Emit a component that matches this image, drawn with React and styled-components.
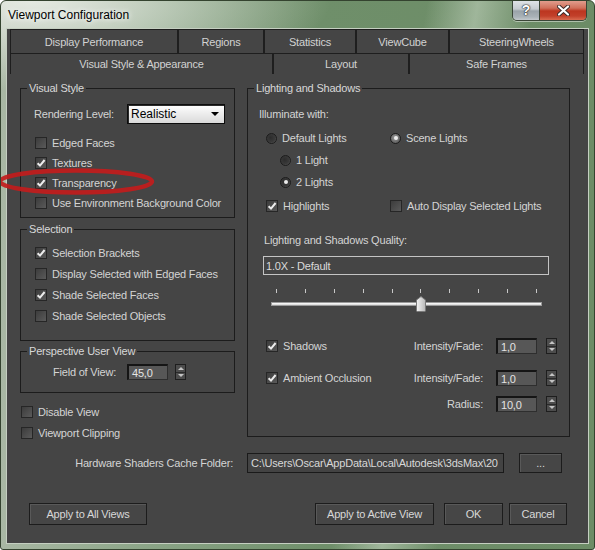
import React from 'react';
import styled, { createGlobalStyle } from 'styled-components';

const GlobalStyle = createGlobalStyle`
  html, body {
    margin: 0;
    padding: 0;
    background: #ffffff;
  }
  body {
    font-family: "Liberation Sans", Arial, sans-serif;
    font-size: 11px;
  }
`;

const Window = styled.div`
  position: relative;
  width: 595px;
  height: 550px;
  box-sizing: border-box;
  display: flex;
  flex-direction: column;
  border: 1px solid #34432f;
  border-radius: 6px 6px 3px 3px;
  overflow: hidden;
  background:
    radial-gradient(ellipse 300px 90px at 30px 0px, rgba(232, 236, 229, 0.95), rgba(232, 236, 229, 0) 100%),
    linear-gradient(100deg, rgba(200, 215, 196, 0) 0, rgba(200, 215, 196, 0) 420px, rgba(200, 215, 196, 0.55) 470px, rgba(200, 215, 196, 0) 525px),
    linear-gradient(90deg, #a9b8a4 0, #8aa486 150px, #6f8f6a 320px, #6c8c66 100%);
`;

const TitleBar = styled.div`
  height: 28px;
  flex: none;
  display: flex;
  align-items: flex-start;
  padding-left: 7px;
`;

const Title = styled.div`
  margin-top: 7px;
  font-size: 12px;
  line-height: 15px;
  color: #000;
  text-shadow: 0 0 5px rgba(255, 255, 255, 0.95), 0 0 9px rgba(255, 255, 255, 0.8);
`;

const CaptionButtons = styled.div`
  margin-left: auto;
  margin-right: 7px;
  margin-top: -1px;
  display: flex;
  height: 20px;
  border: 1px solid #3a4637;
  border-top: none;
  border-radius: 0 0 5px 5px;
  overflow: hidden;
  box-shadow: 0 1px 0 rgba(255, 255, 255, 0.45);
`;

const CaptionButton = styled.div`
  width: ${p => p.w}px;
  display: flex;
  align-items: center;
  justify-content: center;
  background: ${p => p.danger
    ? 'linear-gradient(#e3a394, #d0705b 40%, #bc3620 55%, #c2402a 80%, #d86a4f)'
    : 'linear-gradient(#e2e6e9, #c6ccd0 45%, #9aa3a9 55%, #aab3b8 85%, #c4cacd)'};
  & + & {
    border-left: 1px solid #3a4637;
  }
`;

const HelpGlyph = styled.span`
  font-family: "Liberation Sans", Arial, sans-serif;
  font-weight: bold;
  font-size: 14px;
  color: #fff;
  text-shadow: 0 0 1px #222, 0 0 1px #222, 0 0 2px #333;
`;

const Client = styled.div`
  flex: 1;
  margin: 0 6px 6px 6px;
  background: #454545;
  box-shadow: 0 0 0 1px #c5cfc1;
  display: flex;
  flex-direction: column;
  color: #d4d4d4;
  letter-spacing: -0.2px;
`;

const Tabs = styled.div`
  padding-left: 3px;
  display: flex;
  flex-direction: column;
`;

const TabRow = styled.div`
  display: flex;
  height: ${p => p.h}px;
`;

const Tab = styled.div`
  width: ${p => p.w}px;
  box-sizing: border-box;
  border: 1px solid #1e1e1e;
  border-bottom: none;
  display: flex;
  align-items: center;
  justify-content: center;
  color: #d2d2d2;
  font-size: 11px;
`;

const Panel = styled.div`
  display: flex;
  gap: 12px;
  padding: 7px 0 0 13px;
`;

const Column = styled.div`
  width: ${p => p.w}px;
  display: flex;
  flex-direction: column;
`;

const Group = styled.fieldset`
  margin: ${p => p.mt || 0}px 0 0 0;
  padding: 0;
  min-width: 0;
  border: 1px solid #1c1c1c;
  height: ${p => p.h}px;
  box-sizing: border-box;
`;

const Legend = styled.legend`
  margin-left: 6px;
  padding: 0 2px;
  font-size: 11px;
  line-height: 14px;
  color: #d8d8d8;
`;

const Row = styled.div`
  display: flex;
  align-items: center;
  height: ${p => p.h || 20}px;
  margin-top: ${p => p.mt || 0}px;
  padding-left: ${p => p.pl || 0}px;
  padding-right: ${p => p.pr || 0}px;
  white-space: nowrap;
`;

const Item = styled.div`
  display: flex;
  align-items: center;
  gap: 5px;
  width: ${p => (p.w ? `${p.w}px` : 'auto')};
  flex: ${p => (p.grow ? 1 : 'none')};
`;

const Text = styled.span`
  display: inline-block;
  width: ${p => (p.w ? `${p.w}px` : 'auto')};
  margin-right: ${p => p.mr || 0}px;
  color: #d4d4d4;
`;

const Box = styled.span`
  width: 12px;
  height: 12px;
  flex: none;
  box-sizing: border-box;
  border: 1px solid #262626;
  background: linear-gradient(135deg, #3c3c3c, #5a5a5a);
  display: flex;
  align-items: center;
  justify-content: center;
`;

const RadioDot = styled.span`
  width: 11px;
  height: 11px;
  flex: none;
  box-sizing: border-box;
  border-radius: 50%;
  border: 1px solid #1c1c1c;
  background: ${p => p.light
    ? 'radial-gradient(circle at 45% 40%, #9a9a9a, #5a5a5a 80%)'
    : 'radial-gradient(circle at 40% 40%, #2c2c2c, #3a3a3a 60%, #6a6a6a 100%)'};
  display: flex;
  align-items: center;
  justify-content: center;

  &::after {
    content: '';
    width: 4px;
    height: 4px;
    border-radius: 50%;
    background: ${p => (p.checked ? '#ececec' : 'transparent')};
  }
`;

const Select = styled.div`
  width: 98px;
  height: 20px;
  box-sizing: border-box;
  border: 1px solid #0c0c0c;
  box-shadow: inset 1px 1px 0 #2a2a2a;
  background: linear-gradient(#ffffff, #ececec 50%, #dadada);
  color: #000;
  font-size: 12px;
  letter-spacing: 0;
  display: flex;
  align-items: center;
  justify-content: space-between;
  padding: 0 5px 0 3px;
`;

const Caret = styled.span`
  width: 0;
  height: 0;
  border-left: 4px solid transparent;
  border-right: 4px solid transparent;
  border-top: 4px solid #000;
`;

const NumInput = styled.div`
  width: ${p => p.w || 41}px;
  height: 16px;
  box-sizing: border-box;
  border: 1px solid #2e2e2e;
  border-top: 2px solid #151515;
  border-left: 2px solid #151515;
  background: #575757;
  color: #e4e4e4;
  display: flex;
  align-items: center;
  padding-left: 3px;
  margin-right: ${p => p.mr || 0}px;
`;

const Spinner = styled.span`
  width: 11px;
  height: 16px;
  box-sizing: border-box;
  border: 1px solid #1e1e1e;
  background: #4c4c4c;
  display: flex;
  flex-direction: column;
`;

const SpinHalf = styled.span`
  flex: 1;
  display: flex;
  align-items: center;
  justify-content: center;
  & + & {
    border-top: 1px solid #2a2a2a;
  }
  &::after {
    content: '';
    border-left: 3px solid transparent;
    border-right: 3px solid transparent;
    ${p => (p.down ? 'border-top: 3px solid #c4c4c4;' : 'border-bottom: 3px solid #c4c4c4;')}
  }
`;

const QualityBox = styled.div`
  width: 286px;
  height: 19px;
  box-sizing: border-box;
  margin: 7px 0 0 15px;
  border: 1px solid #c4c4c4;
  display: flex;
  align-items: center;
  padding-left: 2px;
  color: #dadada;
`;

const Slider = styled.div`
  position: relative;
  width: 271px;
  height: 32px;
  margin: 7px 0 0 23px;
`;

const Ticks = styled.div`
  display: flex;
  justify-content: space-between;
  padding: 7px 5px 0 5px;
`;

const Tick = styled.span`
  width: 1px;
  height: 4px;
  background: #c8c8c8;
`;

const Track = styled.div`
  margin-top: 9px;
  height: 4px;
  box-sizing: border-box;
  border: 1px solid #9a9a9a;
  background: linear-gradient(#ffffff, #d6d6d6);
`;

const Thumb = styled.svg`
  position: absolute;
  top: 14px;
`;

const CacheRow = styled.div`
  display: flex;
  align-items: center;
  height: 20px;
  margin-top: 10px;
`;

const CacheLabel = styled.div`
  width: 240px;
  box-sizing: border-box;
  text-align: right;
  padding-right: 14px;
  color: #d4d4d4;
`;

const PathInput = styled.div`
  width: 257px;
  height: 20px;
  box-sizing: border-box;
  border: 1px solid #1a1a1a;
  background: #434343;
  color: #d8d8d8;
  white-space: nowrap;
  overflow: hidden;
  padding: 0 3px;
  display: flex;
  align-items: center;
`;

const Button = styled.div`
  width: ${p => p.w}px;
  height: ${p => p.h || 22}px;
  box-sizing: border-box;
  margin-left: ${p => p.ml || 0}px;
  border: 1px solid #1c1c1c;
  box-shadow: inset 1px 1px 0 #595959;
  background: #464646;
  color: #d8d8d8;
  display: flex;
  align-items: center;
  justify-content: center;
`;

const ButtonRow = styled.div`
  display: flex;
  align-items: center;
  margin-top: 30px;
  padding: 0 21px 0 22px;
`;

const Spacer = styled.div`
  flex: 1;
`;

const Annotation = styled.svg`
  position: absolute;
  left: -1px;
  top: -1px;
  pointer-events: none;
`;

function CheckMark() {
  return (
    <svg width="10" height="10" viewBox="0 0 10 10">
      <path d="M1.6 5.2 L4 7.6 L8.6 2" fill="none" stroke="#ececec" strokeWidth="2" />
    </svg>
  );
}

function Check({ checked, label }) {
  return (
    <Item>
      <Box>{checked && <CheckMark />}</Box>
      <Text>{label}</Text>
    </Item>
  );
}

function Radio({ checked, light, label, w }) {
  return (
    <Item w={w}>
      <RadioDot checked={checked} light={light} />
      <Text>{label}</Text>
    </Item>
  );
}

function Spin() {
  return (
    <Spinner>
      <SpinHalf />
      <SpinHalf down />
    </Spinner>
  );
}

function CloseIcon() {
  return (
    <svg width="13" height="11" viewBox="0 0 13 11">
      <path d="M2 1.5 L11 9.5 M11 1.5 L2 9.5" stroke="#3a2a28" strokeWidth="4" strokeLinecap="round" />
      <path d="M2 1.5 L11 9.5 M11 1.5 L2 9.5" stroke="#ffffff" strokeWidth="2.2" strokeLinecap="round" />
    </svg>
  );
}

const tabsTop = [
  { label: 'Display Performance', w: 168 },
  { label: 'Regions', w: 86 },
  { label: 'Statistics', w: 92 },
  { label: 'ViewCube', w: 93 },
  { label: 'SteeringWheels', w: 135 },
];

const tabsBottom = [
  { label: 'Visual Style & Appearance', w: 263 },
  { label: 'Layout', w: 136 },
  { label: 'Safe Frames', w: 175 },
];

const TICKS = 10;
const SLIDER_VALUE = 5;

export default function App() {
  const tickStep = (271 - 10 - 1) / (TICKS - 1);
  const thumbLeft = 5 + 0.5 + SLIDER_VALUE * tickStep - 5;

  return (
    <>
      <GlobalStyle />
      <Window>
        <TitleBar>
          <Title>Viewport Configuration</Title>
          <CaptionButtons>
            <CaptionButton w={26}><HelpGlyph>?</HelpGlyph></CaptionButton>
            <CaptionButton w={46} danger><CloseIcon /></CaptionButton>
          </CaptionButtons>
        </TitleBar>

        <Client>
          <Tabs>
            <TabRow h={24}>
              {tabsTop.map(t => <Tab key={t.label} w={t.w}>{t.label}</Tab>)}
            </TabRow>
            <TabRow h={21}>
              {tabsBottom.map(t => <Tab key={t.label} w={t.w}>{t.label}</Tab>)}
            </TabRow>
          </Tabs>

          <Panel>
            <Column w={215}>
              <Group h={137}>
                <Legend>Visual Style</Legend>
                <Row mt={9} pl={13}>
                  <Text w={93}>Rendering Level:</Text>
                  <Select>Realistic<Caret /></Select>
                </Row>
                <Row mt={9} pl={14}><Check label="Edged Faces" /></Row>
                <Row pl={14}><Check checked label="Textures" /></Row>
                <Row pl={14}><Check checked label="Transparency" /></Row>
                <Row pl={14}><Check label="Use Environment Background Color" /></Row>
              </Group>

              <Group h={119} mt={4}>
                <Legend>Selection</Legend>
                <Row mt={6} h={21} pl={14}><Check checked label="Selection Brackets" /></Row>
                <Row h={21} pl={14}><Check label="Display Selected with Edged Faces" /></Row>
                <Row h={21} pl={14}><Check checked label="Shade Selected Faces" /></Row>
                <Row h={21} pl={14}><Check label="Shade Selected Objects" /></Row>
              </Group>

              <Group h={49} mt={3}>
                <Legend>Perspective User View</Legend>
                <Row mt={6} h={16} pl={32}>
                  <Text w={74}>Field of View:</Text>
                  <NumInput mr={7}>45,0</NumInput>
                  <Spin />
                </Row>
              </Group>

              <Row mt={8} h={21} pl={1}><Check label="Disable View" /></Row>
              <Row h={21} pl={1}><Check label="Viewport Clipping" /></Row>
            </Column>

            <Column w={323}>
              <Group h={356}>
                <Legend>Lighting and Shadows</Legend>
                <Row mt={9} pl={11}><Text>Illuminate with:</Text></Row>
                <Row mt={3} h={22} pl={18}>
                  <Radio w={124} label="Default Lights" />
                  <Radio checked light label="Scene Lights" />
                </Row>
                <Row h={22} pl={32}><Radio label="1 Light" /></Row>
                <Row h={22} pl={32}><Radio checked label="2 Lights" /></Row>
                <Row mt={3} pl={18}>
                  <Item w={124}>
                    <Box><CheckMark /></Box>
                    <Text>Highlights</Text>
                  </Item>
                  <Check label="Auto Display Selected Lights" />
                </Row>
                <Row mt={14} h={19} pl={16}><Text>Lighting and Shadows Quality:</Text></Row>
                <QualityBox>1.0X - Default</QualityBox>
                <Slider>
                  <Ticks>
                    {Array.from({ length: TICKS }, (_, i) => <Tick key={i} />)}
                  </Ticks>
                  <Track />
                  <Thumb width="10" height="16" viewBox="0 0 10 16" style={{ left: `${thumbLeft}px` }}>
                    <defs>
                      <linearGradient id="thumbFill" x1="0" y1="0" x2="1" y2="0">
                        <stop offset="0" stopColor="#f4f4f4" />
                        <stop offset="1" stopColor="#b8b8b8" />
                      </linearGradient>
                    </defs>
                    <path d="M0.5 4 L5 0.5 L9.5 4 V14.5 Q9.5 15.5 8.5 15.5 H1.5 Q0.5 15.5 0.5 14.5 Z" fill="url(#thumbFill)" stroke="#7a7a7a" />
                  </Thumb>
                </Slider>
                <Row mt={23} h={18} pl={18} pr={12}>
                  <Item grow>
                    <Box><CheckMark /></Box>
                    <Text>Shadows</Text>
                  </Item>
                  <Text mr={13}>Intensity/Fade:</Text>
                  <NumInput mr={9}>1,0</NumInput>
                  <Spin />
                </Row>
                <Row mt={14} h={18} pl={18} pr={12}>
                  <Item grow>
                    <Box><CheckMark /></Box>
                    <Text>Ambient Occlusion</Text>
                  </Item>
                  <Text mr={13}>Intensity/Fade:</Text>
                  <NumInput mr={9}>1,0</NumInput>
                  <Spin />
                </Row>
                <Row mt={8} h={18} pl={18} pr={12}>
                  <Spacer />
                  <Text mr={13}>Radius:</Text>
                  <NumInput mr={9}>10,0</NumInput>
                  <Spin />
                </Row>
              </Group>
            </Column>
          </Panel>

          <CacheRow>
            <CacheLabel>Hardware Shaders Cache Folder:</CacheLabel>
            <PathInput>{'C:\\Users\\Oscar\\AppData\\Local\\Autodesk\\3dsMax\\20'}</PathInput>
            <Button w={43} h={20} ml={15}>...</Button>
          </CacheRow>

          <ButtonRow>
            <Button w={118}>Apply to All Views</Button>
            <Spacer />
            <Button w={119}>Apply to Active View</Button>
            <Button w={59} ml={10}>OK</Button>
            <Button w={58} ml={6}>Cancel</Button>
          </ButtonRow>
        </Client>

        <Annotation width="595" height="550" viewBox="0 0 595 550">
          <ellipse cx="76" cy="181.5" rx="76" ry="11" fill="none" stroke="#c21c1c" strokeOpacity="0.92" strokeWidth="4.5" />
        </Annotation>
      </Window>
    </>
  );
}
